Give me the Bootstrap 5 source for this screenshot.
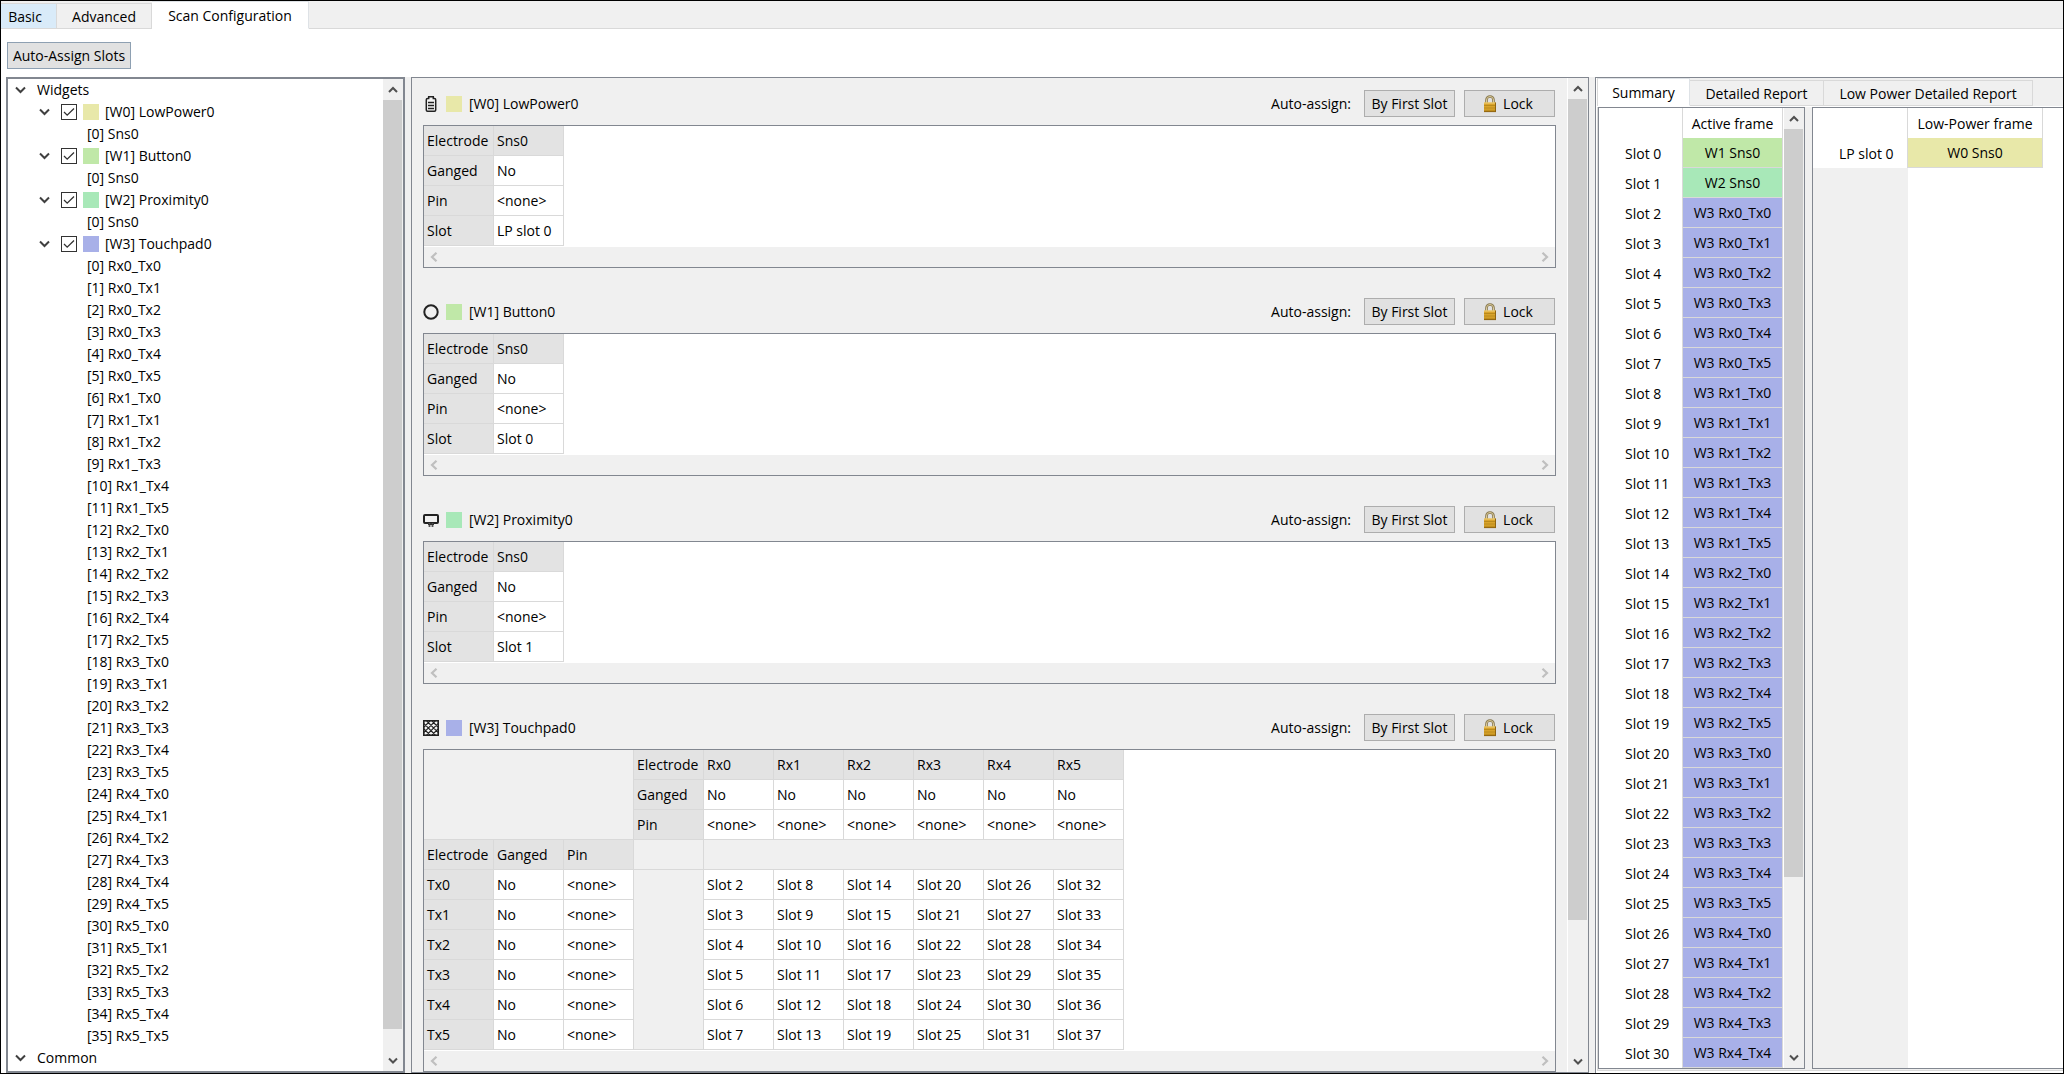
<!DOCTYPE html>
<html lang="en">
<head>
<meta charset="utf-8">
<meta name="viewport" content="width=device-width, initial-scale=1">
<title>Scan Configuration</title>
<link href="https://cdn.jsdelivr.net/npm/bootstrap@5.3.0/dist/css/bootstrap.min.css" rel="stylesheet">
<style>
  :root { --panel: #f0f0f0; --edge: #828790; --line: #d9d9d9; --w0: #e8e8a9; --w1: #c0e8a8; --w2: #a8e8b8; --w3: #a8b0e8; }
  body { font-family: "Open Sans", "Noto Sans", sans-serif; font-size: 14px; line-height: 20px; color: #000; background: #fff; }
  .app { height: 100vh; border: 1px solid #000; overflow: hidden; }
  .bg-panel { background: var(--panel); }
  .sw { width: 16px; height: 16px; flex: none; }
  .c-w0 { background: var(--w0); } .c-w1 { background: var(--w1); } .c-w2 { background: var(--w2); } .c-w3 { background: var(--w3); }

  .win-tabs { height: 28px; background: var(--panel); border-bottom: 1px solid var(--line); align-items: flex-end; flex-wrap: nowrap; }
  .win-tabs .nav-link { color: #000; background: var(--panel); border: 1px solid var(--line); border-left-width: 0; border-radius: 0; padding: 1px 0 0; margin: 0 0 -1px; height: 26px; line-height: 24px; white-space: nowrap; }
  .win-tabs .nav-item { flex: none; }
  .win-tabs .nav-link.active { background: #fff; border-bottom-color: #fff; height: 28px; }
  .win-tabs .hovered { background: #d9ebf9; }
  .win-tabs .w-basic { width: 56px; padding-right: 7px; } .w-adv { width: 95px; } .w-scan { width: 157px; }
  .w-sum { width: 92px; } .w-det { width: 134px; } .w-low { width: 209px; }

  .toolbar { padding: 13px 6px 8px; }
  .btn-win { --bs-btn-padding-x: 0; --bs-btn-padding-y: 0; --bs-btn-font-size: 14px; --bs-btn-border-radius: 0; --bs-btn-color: #000; --bs-btn-bg: #e1e1e1; --bs-btn-border-color: #adadad; --bs-btn-hover-bg: #e5f1fb; --bs-btn-hover-color: #000; --bs-btn-hover-border-color: #0078d7; width: 91px; height: 27px; line-height: 26px; }
  .btn-focus { --bs-btn-border-color: #8ea0b2; width: 124px; }

  .work { min-height: 0; background: var(--panel); gap: 6px; }
  .tree-wrap { flex: 0 0 404px; padding-left: 5px; background: #fff; }
  .tree { border: 2px solid var(--edge); background: #fff; width: 100%; min-height: 0; }
  .tree-row { height: 22px; display: flex; align-items: center; line-height: 22px; white-space: nowrap; }
  .lv0 { padding-left: 7px; } .lv1 { padding-left: 31px; } .lv2 { padding-left: 79px; }
  .tree-row .chev { margin-right: 11px; }
  .lv1 label { display: flex; align-items: center; gap: 6px; }
  .chev { width: 11px; height: 8px; flex: none; }
  .form-check-input.tick { width: 16px; height: 16px; margin: 0; border: 1px solid #333; border-radius: 0; background-size: 14px 14px; background-color: #fff; flex: none; }
  .form-check-input.tick:checked { border-color: #333; background-color: #fff; background-image: url("data:image/svg+xml,%3csvg xmlns='http://www.w3.org/2000/svg' viewBox='0 0 14 14'%3e%3cpath d='M2 7l3.2 3.2L12 3.5' fill='none' stroke='%23333' stroke-width='1.3'/%3e%3c/svg%3e"); }

  .vbar { width: 21px; flex: none; background: var(--panel); border: 0 solid #fff; border-left-width: 1px; padding-right: 1px; display: flex; flex-direction: column; }
  .vbar .cap { height: 21px; flex: none; display: flex; align-items: center; justify-content: center; }
  .vbar .thumb { background: #cdcdcd; }
  .hbar { height: 20px; margin-top: 1px; padding: 0 6px; background: var(--panel); display: flex; align-items: center; justify-content: space-between; }

  .editor { flex: 1 1 0; min-width: 0; border: 1px solid var(--edge); background: var(--panel); }
  .editor-body { flex: 1 1 0; min-width: 0; overflow: hidden; padding: 12px 11px 0; }
  .widget { margin-bottom: 30px; }
  .widget-head { height: 27px; margin-bottom: 8px; padding-right: 1px; gap: 7px; }
  .widget-tools { gap: 9px; }
  .lock-btn { gap: 6px; padding-right: 3px; }
  .grid-box { border: 1px solid var(--edge); background: #fff; }

  .cells { border-collapse: separate; border-spacing: 0; table-layout: fixed; margin: 0; }
  .cells td, .cells th { font-weight: 400; text-align: left; height: 30px; padding: 0 0 0 3px; line-height: 29px; border: 0 solid var(--line); border-width: 0 1px 1px 0; white-space: nowrap; overflow: visible; }
  .cells th { background: #e3e3e3; }
  .cells .void { background: var(--panel); }
  .cells-sm { width: 140px; } .cells-lg { width: 700px; }

  .report { flex: 0 0 468px; border: 1px solid var(--edge); border-width: 1px 0 0 1px; background: #fff; padding: 0 0 2px 1px; }
  .report .win-tabs { border-bottom: 0; border-left: 1px solid var(--line); }
  .report .nav-link { margin-bottom: 0; }
  .frames { border-left: 1px solid var(--line); border-bottom: 1px solid var(--line); padding-bottom: 1px; margin-top: 1px; min-height: 0; }
  .frame-a { flex: 0 0 207px; border: 1px solid var(--edge); overflow: hidden; margin-right: 7px; background: #fff; }
  .frame-b { flex: 1 1 0; border: 1px solid var(--edge); border-right: 0; overflow: hidden; background: linear-gradient(90deg, var(--panel) 95px, #fff 95px); }
  .slots { border-collapse: separate; border-spacing: 0; table-layout: fixed; margin: 0; }
  .slots th, .slots td { font-weight: 400; height: 30px; padding: 0; line-height: 28px; text-align: center; border: 0 solid var(--line); border-right-width: 1px; white-space: nowrap; background-clip: padding-box; }
  .slots td { border-bottom-width: 1px; }
  .slots tbody th { text-align: left; padding: 2px 0 0 26px; background: #fff; }
  .slots thead th { background: #fff; padding-top: 2px; }
  .slots-a { width: 184px; } .slots-b { width: 230px; }
  .slots .k-a { width: 84px; } .slots .k-b { width: 95px; }
</style>
</head>
<body>
<svg class="d-none" xmlns="http://www.w3.org/2000/svg">
  <symbol id="down" viewBox="0 0 11 8"><path d="M1 1.500l4.500 4.500L10 1.500" fill="none" stroke="#404040" stroke-width="2"/></symbol>
  <symbol id="sdown" viewBox="0 0 10 8"><path d="M1 1.500l4 4 4-4" fill="none" stroke="#505050" stroke-width="2"/></symbol>
  <symbol id="sup" viewBox="0 0 10 8"><path d="M1 6l4-4 4 4" fill="none" stroke="#505050" stroke-width="2"/></symbol>
  <symbol id="sleft" viewBox="0 0 8 10"><path d="M6.500 .8L2 5l4.500 4.200" fill="none" stroke="#bfbfbf" stroke-width="2.200"/></symbol>
  <symbol id="sright" viewBox="0 0 8 10"><path d="M1.500 .8L6 5 1.500 9.200" fill="none" stroke="#bfbfbf" stroke-width="2.200"/></symbol>
  <symbol id="i-battery" viewBox="0 0 16 16"><path d="M5.700 2.500V.8h4.600v1.700h1.200q1.200 0 1.200 1.200v10.300q0 1.200-1.200 1.200h-7q-1.200 0-1.200-1.200V3.700q0-1.200 1.200-1.200z" fill="#f6f6f6" stroke="#222" stroke-width="1.500"/><path d="M5 6.500h6M5 9.500h6M5 12.500h6" stroke="#222" stroke-width="1.700"/></symbol>
  <symbol id="i-circle" viewBox="0 0 16 16"><circle cx="8" cy="8" r="6.700" fill="none" stroke="#222" stroke-width="2"/></symbol>
  <symbol id="i-prox" viewBox="0 0 16 16"><rect x="1" y="3" width="14" height="8" rx="1" fill="none" stroke="#222" stroke-width="2"/><path d="M6.500 11v4M9.500 11v4" stroke="#555" stroke-width="1.800"/><path d="M5 12.500h6" stroke="#333" stroke-width="1"/></symbol>
  <symbol id="i-pad" viewBox="0 0 16 16"><rect x=".8" y=".8" width="14.400" height="14.400" fill="#f6f6f6" stroke="#222" stroke-width="1.600"/><path d="M1 7L7 1M1 12.300L12.300 1M3.700 15L15 3.700M9 15l6-6M15 7L9 1M15 12.300L3.700 1M12.300 15L1 3.700M7 15L1 9" fill="none" stroke="#222" stroke-width="1.100"/></symbol>
  <symbol id="i-lock" viewBox="0 0 14 18"><path d="M3.500 8V5a3.500 3.500 0 0 1 7 0v3" fill="none" stroke="#85764f" stroke-width="2.600"/><path d="M3.500 8V5a3.500 3.500 0 0 1 7 0v3" fill="none" stroke="#dccb98" stroke-width="1"/><rect x="1" y="7.500" width="12" height="9.500" fill="#d9a32b"/><path d="M1 8h12" stroke="#f3d682"/><path d="M1 10.500h12M1 13h12M1 15.300h12" stroke="#b98a1c"/><path d="M12.500 7.500V17M1 16.600h12" stroke="#8f6410"/></symbol>
</svg>

<div class="app d-flex flex-column">
  <ul class="nav nav-tabs win-tabs flex-shrink-0" role="tablist">
    <li class="nav-item"><button class="nav-link hovered w-basic" type="button" role="tab">Basic</button></li>
    <li class="nav-item"><button class="nav-link w-adv" type="button" role="tab">Advanced</button></li>
    <li class="nav-item"><button class="nav-link active w-scan" type="button" role="tab" aria-selected="true">Scan Configuration</button></li>
  </ul>
  <div class="toolbar d-flex flex-shrink-0">
    <button class="btn btn-win btn-focus" id="autoAll" type="button">Auto-Assign Slots</button>
  </div>

  <main class="work d-flex flex-grow-1">
    <div class="tree-wrap d-flex">
      <div class="tree d-flex">
        <div class="flex-grow-1 overflow-hidden" id="tree"></div>
        <div class="vbar" data-thumb="930" data-rest="21"></div>
      </div>
    </div>

    <div class="editor d-flex">
      <div class="editor-body" id="editor"></div>
      <div class="vbar" data-thumb="822" data-rest="131"></div>
    </div>

    <div class="report d-flex flex-column">
      <ul class="nav nav-tabs win-tabs flex-shrink-0" role="tablist">
        <li class="nav-item"><button class="nav-link active w-sum" type="button" role="tab" aria-selected="true">Summary</button></li>
        <li class="nav-item"><button class="nav-link w-det" type="button" role="tab">Detailed Report</button></li>
        <li class="nav-item"><button class="nav-link w-low" type="button" role="tab">Low Power Detailed Report</button></li>
      </ul>
      <div class="frames bg-panel d-flex flex-grow-1">
        <div class="frame-a d-flex">
          <div class="flex-grow-1 overflow-hidden">
            <table class="slots slots-a">
              <thead><tr><th class="k-a"></th><th>Active frame</th></tr></thead>
              <tbody id="slots"></tbody>
            </table>
          </div>
          <div class="vbar" data-thumb="748" data-rest="170"></div>
        </div>
        <div class="frame-b">
          <table class="slots slots-b">
            <thead><tr><th class="k-b"></th><th>Low-Power frame</th></tr></thead>
            <tbody><tr><th>LP slot 0</th><td class="c-w0">W0 Sns0</td></tr></tbody>
          </table>
        </div>
      </div>
    </div>
  </main>
</div>

<script src="https://cdn.jsdelivr.net/npm/bootstrap@5.3.0/dist/js/bootstrap.bundle.min.js"></script>
<script>
  const icon = (id, w, h, cls = '') => `<svg class="flex-shrink-0 ${cls}" width="${w}" height="${h}" aria-hidden="true"><use href="#${id}"/></svg>`;
  const pads = [];
  for (let r = 0; r < 6; r++) for (let t = 0; t < 6; t++) pads.push(`Rx${r}_Tx${t}`);
  const widgets = [
    { name: 'LowPower0', icon: 'i-battery', sensors: ['Sns0'], slot: 'LP slot 0' },
    { name: 'Button0', icon: 'i-circle', sensors: ['Sns0'], slot: 'Slot 0' },
    { name: 'Proximity0', icon: 'i-prox', sensors: ['Sns0'], slot: 'Slot 1' },
    { name: 'Touchpad0', icon: 'i-pad', sensors: pads }
  ];
  const none = '&lt;none&gt;';
  const chev = icon('down', 11, 8, 'chev');

  document.getElementById('tree').innerHTML =
    `<div class="tree-row lv0">${chev}Widgets</div>` +
    widgets.map((w, i) =>
      `<div class="tree-row lv1">${chev}<label><input class="form-check-input tick" type="checkbox" id="w${i}" checked><span class="sw c-w${i}"></span><span>[W${i}] ${w.name}</span></label></div>` +
      w.sensors.map((s, k) => `<div class="tree-row lv2">[${k}] ${s}</div>`).join('')).join('') +
    `<div class="tree-row lv0">${chev}Common</div>`;

  const smallTable = w => `<table class="cells cells-sm">
    <tr><th>Electrode</th><th>Sns0</th></tr><tr><th>Ganged</th><td>No</td></tr>
    <tr><th>Pin</th><td>${none}</td></tr><tr><th>Slot</th><td>${w.slot}</td></tr></table>`;
  const six = f => [0, 1, 2, 3, 4, 5].map(f).join('');
  const padTable = () => `<table class="cells cells-lg"><colgroup>${'<col>'.repeat(10)}</colgroup>
    <tr><td class="void" colspan="3" rowspan="3"></td><th>Electrode</th>${six(i => `<th>Rx${i}</th>`)}</tr>
    <tr><th>Ganged</th>${six(() => '<td>No</td>')}</tr>
    <tr><th>Pin</th>${six(() => `<td>${none}</td>`)}</tr>
    <tr><th>Electrode</th><th>Ganged</th><th>Pin</th><td class="void"></td><td class="void" colspan="6"></td></tr>
    ${six(t => `<tr><th>Tx${t}</th><td>No</td><td>${none}</td>${t ? '' : '<td class="void" rowspan="6"></td>'}${six(r => `<td>Slot ${2 + r * 6 + t}</td>`)}</tr>`)}</table>`;

  document.getElementById('editor').innerHTML = widgets.map((w, i) => `<section class="widget">
    <div class="widget-head d-flex align-items-center">
      ${icon(w.icon, 16, 16)}<span class="sw c-w${i}"></span><span>[W${i}] ${w.name}</span>
      <div class="widget-tools d-flex align-items-center ms-auto">
        <span class="pe-1">Auto-assign:</span>
        <button class="btn btn-win" type="button">By First Slot</button>
        <button class="btn btn-win lock-btn d-flex align-items-center justify-content-center" type="button">${icon('i-lock', 14, 18)}Lock</button>
      </div>
    </div>
    <div class="grid-box">${w.slot ? smallTable(w) : padTable()}
      <div class="hbar">${icon('sleft', 8, 10)}${icon('sright', 8, 10)}</div></div>
  </section>`).join('');

  const rows = [['c-w1', 'W1 Sns0'], ['c-w2', 'W2 Sns0'], ...pads.map(p => ['c-w3', 'W3 ' + p])];
  document.getElementById('slots').innerHTML = rows.slice(0, 31)
    .map(([c, t], i) => `<tr><th>Slot ${i}</th><td class="${c}">${t}</td></tr>`).join('');

  document.querySelectorAll('.vbar').forEach(b => {
    b.innerHTML = `<div class="cap">${icon('sup', 10, 8)}</div>
      <div class="thumb" style="flex-grow:${b.dataset.thumb}"></div><div style="flex-grow:${b.dataset.rest}"></div>
      <div class="cap">${icon('sdown', 10, 8)}</div>`;
  });
</script>
</body>
</html>
